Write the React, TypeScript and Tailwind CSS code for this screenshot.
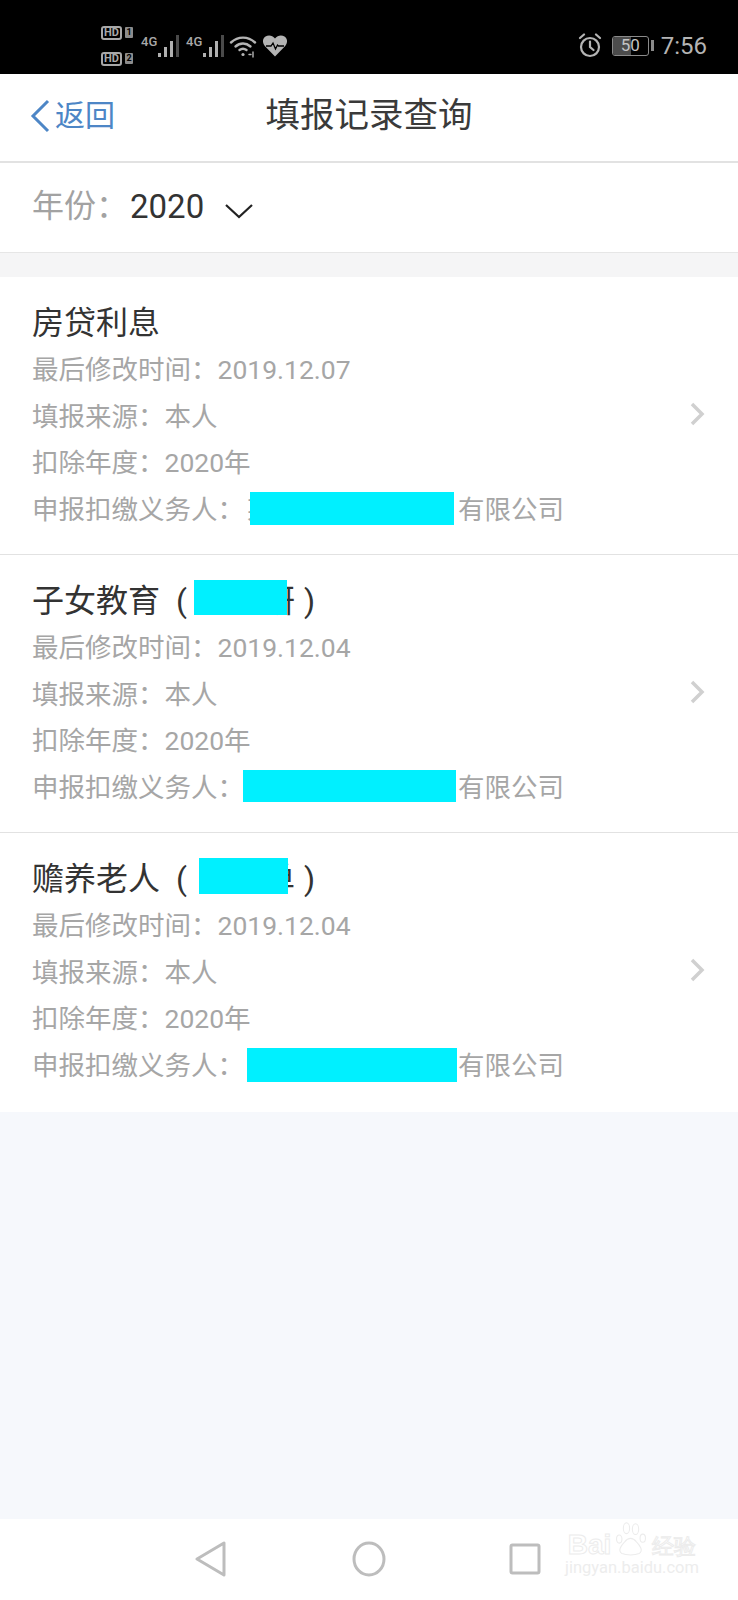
const FONT = "font-['Roboto','Noto_Sans_CJK_SC',sans-serif]";

function SimBadge({ n }: { n: string }) {
  return (
    <div className="flex items-center gap-[3px]">
      <span className="flex h-[14px] w-[21px] items-center justify-center rounded-[3px] border-2 border-[#a8a8a8] text-[11px] leading-none font-bold text-[#a8a8a8]">
        HD
      </span>
      <span className="flex h-[11px] w-[8px] items-center justify-center rounded-[1px] bg-[#8c8c8c] text-[9px] leading-none font-bold text-black">
        {n}
      </span>
    </div>
  );
}

function Signal() {
  return (
    <div className="flex h-[26px] w-[44px] items-start">
      <span className="mt-[2px] w-[15px] text-[13px] leading-[13px] font-medium text-[#a8a8a8]">4G</span>
      <svg width="26" height="24" viewBox="0 0 26 24" className="mt-[1px] ml-[1px]">
        <rect x="1" y="19" width="3" height="4" fill="#b0b0b0" />
        <rect x="7" y="13" width="3" height="10" fill="#b0b0b0" />
        <rect x="13" y="7" width="3" height="16" fill="#b0b0b0" />
        <rect x="19" y="1" width="3" height="22" fill="#4a4a4a" />
      </svg>
    </div>
  );
}

function StatusBar() {
  return (
    <div className={`flex h-[74px] items-center justify-between bg-black pt-[17px] pr-[31px] pl-[101px] ${FONT}`}>
      <div className="flex items-center">
        <div className="flex w-[40px] flex-col gap-[12px]">
          <SimBadge n="1" />
          <SimBadge n="2" />
        </div>
        <div className="flex gap-[1px]">
          <Signal />
          <Signal />
        </div>
        <svg width="28" height="24" viewBox="0 0 28 24" className="mr-[6px] ml-[-1px]" fill="none" stroke="#b4b4b4" strokeWidth="2.4" strokeLinecap="round">
          <path d="M2 8.500C9 2 19 2 26 8.500" />
          <path d="M6.500 12.500C11 8.500 17 8.500 21.500 12.500" />
          <path d="M10.500 16C12.500 14.500 15.500 14.500 17.500 16" />
          <circle cx="14" cy="20.500" r="1.600" fill="#b4b4b4" stroke="none" />
          <path d="M20 20.500h2M24 18v5" strokeWidth="1.400" />
        </svg>
        <svg width="24" height="22" viewBox="0 0 24 22">
          <path d="M12 21.500 1.800 11C-1 7.500-.5 3.500 2.500 1.500 5.500-.5 9.500.2 12 3.500 14.500.2 18.500-.5 21.500 1.500 24.500 3.500 25 7.500 22.200 11Z" fill="#b4b4b4" />
          <path d="M3 11h5l2-3 2.500 6 2-4 1 1h5.500" fill="none" stroke="#000" strokeWidth="1.300" />
        </svg>
      </div>
      <div className="flex items-center">
        <svg width="24" height="25" viewBox="0 0 24 25" fill="none" stroke="#b4b4b4" strokeWidth="2.200" strokeLinecap="round" className="mr-[10px]">
          <circle cx="12" cy="14" r="9" />
          <path d="M12 8.500V14l3.500 3M2 5l4-3.500M22 5l-4-3.500" />
        </svg>
        <div className="relative mr-[2px] flex h-[20px] w-[37px] items-center justify-center overflow-hidden rounded-[3px] border border-[#8a8a8a] text-[17px] leading-none text-[#c4c4c4]">
          <span className="absolute inset-y-0 left-0 w-[18px] bg-[#4c4c4c]" />
          <span className="relative">50</span>
        </div>
        <span className="mr-[7px] h-[11px] w-[3px] bg-[#8a8a8a]" />
        <span className="text-[24px] leading-none text-[#b4b4b4]">7:56</span>
      </div>
    </div>
  );
}

function NavBar() {
  return (
    <div className="relative flex h-[89px] items-center justify-center border-b-2 border-[#e2e2e2] bg-white">
      <div className="absolute top-[25px] left-[30px] flex items-center text-[#4d86c6]">
        <svg width="20" height="34" viewBox="0 0 20 34" fill="none" stroke="currentColor" strokeWidth="3" className="mr-[5px]">
          <path d="M18 2 3 17l15 15" />
        </svg>
        <span className="text-[30px] leading-[34px]">返回</span>
      </div>
      <span className="mb-[5px] text-[34.500px] leading-none text-[#3a3a3a]">填报记录查询</span>
    </div>
  );
}

function YearRow() {
  return (
    <div className="flex h-[90px] items-center border-b border-[#e6e6e6] bg-white pb-[3px] pl-[32px]">
      <span className="w-[98px] text-[32px] leading-none text-[#a2a2a2]">年份：</span>
      <span className="text-[33px] leading-none text-[#333333]">2020</span>
      <svg width="28" height="16" viewBox="0 0 28 16" fill="none" stroke="#222222" strokeWidth="2.200" className="mt-[9px] ml-[21px]">
        <path d="M1 2l13 12L27 2" />
      </svg>
    </div>
  );
}

function Cover({ className }: { className: string }) {
  return <span className={`absolute bg-[#00f0ff] ${className}`} />;
}

interface RecordProps {
  title: string;
  hiddenTitle?: string;
  titleCover?: string;
  date: string;
  rowCover: string;
  className: string;
}

function Row({ children }: { children: React.ReactNode }) {
  return <div className="h-[46.500px] text-[26.500px] leading-[46.500px] whitespace-nowrap text-[#a6a6a6]">{children}</div>;
}

function RecordItem({ title, hiddenTitle, titleCover, date, rowCover, className }: RecordProps) {
  return (
    <div className={`relative bg-white pl-[32px] ${className}`}>
      <div className="relative h-[48px] text-[32px] leading-[48px] whitespace-nowrap text-[#333333]">
        {title}
        {hiddenTitle && (
          <>
            <span className="ml-[16px]">(</span>
            <span className="absolute top-0 left-[231px]">{hiddenTitle}</span>
            <span className="absolute top-0 left-[272px]">)</span>
            <Cover className={titleCover ?? ''} />
          </>
        )}
      </div>
      <Row>最后修改时间：{date}</Row>
      <div className="relative">
        <Row>填报来源：本人</Row>
        <svg width="15" height="24" viewBox="0 0 15 24" fill="none" stroke="#d0d0d0" strokeWidth="3.500" className="absolute top-[8px] right-[33px]">
          <path d="M2 2l10 10L2 22" />
        </svg>
      </div>
      <Row>扣除年度：2020年</Row>
      <div className="relative">
        <Row>
          申报扣缴义务人：<span className="absolute top-0 left-[215px]">某</span>
          <span className="absolute top-0 left-[426px]">有限公司</span>
        </Row>
        <Cover className={rowCover} />
      </div>
    </div>
  );
}

function BottomNav() {
  return (
    <div className="relative flex h-[81px] items-center bg-white pb-[2px]">
      <div className="flex w-full items-center">
        <svg width="32" height="36" viewBox="0 0 32 36" fill="none" stroke="#bdbdbd" strokeWidth="3" strokeLinejoin="round" className="ml-[195px]">
          <path d="M2 18 29 2v32Z" />
        </svg>
        <svg width="34" height="36" viewBox="0 0 34 36" fill="none" stroke="#bdbdbd" strokeWidth="3" className="ml-[125px]">
          <ellipse cx="17" cy="18" rx="15" ry="16" />
        </svg>
        <svg width="32" height="32" viewBox="0 0 32 32" fill="none" stroke="#bdbdbd" strokeWidth="3" className="ml-[123px]">
          <rect x="2" y="2" width="28" height="28" rx="1.500" />
        </svg>
      </div>
      <div className="absolute top-[2px] left-[565px] flex w-[134px] flex-col items-center">
        <div className="flex items-end font-['Liberation_Sans',sans-serif] leading-none font-bold text-transparent [-webkit-text-stroke:1px_#ececec]">
          <span className="text-[28px]">Bai</span>
          <svg width="40" height="38" viewBox="0 0 34 42" fill="none" stroke="#ececec" strokeWidth="1.200">
            <ellipse cx="12" cy="8" rx="3.500" ry="6" />
            <ellipse cx="22" cy="9" rx="3.500" ry="6" />
            <ellipse cx="30" cy="19" rx="3" ry="4.500" />
            <ellipse cx="4" cy="20" rx="3" ry="4.500" />
            <path d="M7 36c-5-3-1-9 3-13 4-5 9-5 13 0 4 4 8 10 3 13-5 2-14 2-19 0Z" />
          </svg>
          <span className="mb-[1px] ml-[1px] text-[22px] font-normal">经验</span>
        </div>
        <span className="mt-[1px] text-[16.500px] leading-none text-[#ededed]">jingyan.baidu.com</span>
      </div>
    </div>
  );
}

export default function App() {
  return (
    <div className={`flex h-[1600px] w-[738px] flex-col overflow-hidden bg-[#f6f8fc] ${FONT}`}>
      <StatusBar />
      <NavBar />
      <YearRow />
      <div className="h-[24px] bg-[#f5f5f6]" />
      <div className="border-b border-[#e2e2e2]">
        <RecordItem
          className="h-[277px] pt-[22px]"
          title="房贷利息"
          date="2019.12.07"
          rowCover="top-[5px] left-[218px] h-[33px] w-[204px]"
        />
      </div>
      <div className="border-b border-[#e2e2e2]">
        <RecordItem
          className="h-[277px] pt-[22px]"
          title="子女教育"
          hiddenTitle="妍"
          titleCover="top-[3px] left-[162px] h-[35px] w-[93px]"
          date="2019.12.04"
          rowCover="top-[5px] left-[211px] h-[32px] w-[213px]"
        />
      </div>
      <RecordItem
        className="h-[279px] pt-[22px]"
        title="赡养老人"
        hiddenTitle="单"
        titleCover="top-[3px] left-[167px] h-[36px] w-[89px]"
        date="2019.12.04"
        rowCover="top-[5px] left-[215px] h-[34px] w-[210px]"
      />
      <div className="flex-1" />
      <BottomNav />
    </div>
  );
}
